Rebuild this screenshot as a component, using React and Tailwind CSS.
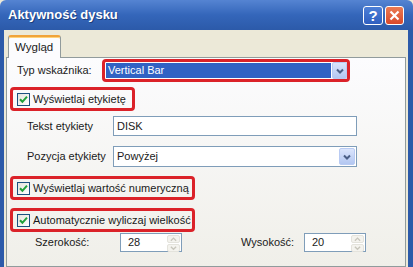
import React from "react";

const Chevron = ({ up = false, color = "#4b5f86", w = 8, sw = 2 }) => (
  <svg width={w} height="6" viewBox="0 0 8 6">
    <path
      d={up ? "M1 5 L4 2 L7 5" : "M1 1.5 L4 4.5 L7 1.5"}
      fill="none"
      stroke={color}
      strokeWidth={sw}
    />
  </svg>
);

const DropButton = ({ className = "" }) => (
  <div
    className={`flex items-center justify-center rounded-[2px] border border-[#b9cbf3] bg-gradient-to-b from-[#dbe5fc] to-[#b3c7f1] ${className}`}
  >
    <Chevron />
  </div>
);

const CheckBox = () => (
  <div className="flex h-[13px] w-[13px] shrink-0 items-center justify-center border border-[#1c5180] bg-gradient-to-br from-[#e4e3dc] to-white">
    <svg width="9" height="9" viewBox="0 0 9 9">
      <path d="M1 4.3 L3.4 6.8 L8 1.6" fill="none" stroke="#21a13a" strokeWidth="2" />
    </svg>
  </div>
);

const Marked = ({ children, className = "" }) => (
  <div className={`rounded-[4px] border-[3px] border-[#db2229] ${className}`}>
    {children}
  </div>
);

const CheckRow = ({ label, className = "" }) => (
  <Marked className={`flex h-[24px] items-center pl-[4px] ${className}`}>
    <CheckBox />
    <span className="ml-[3px] whitespace-nowrap">{label}</span>
  </Marked>
);

const Spinner = ({ value }) => (
  <div className="flex h-[19px] w-[62px] border border-[#7f9db9] bg-white">
    <span className="flex-1 pl-[7px] leading-[17px]">{value}</span>
    <div className="flex w-[15px] flex-col gap-px p-px">
      <div className="flex flex-1 items-center justify-center rounded-[2px] border border-[#e4e3dc] bg-[#f4f3ee]">
        <Chevron up color="#c8c6bc" w={7} sw={1.5} />
      </div>
      <div className="flex flex-1 items-center justify-center rounded-[2px] border border-[#e4e3dc] bg-[#f4f3ee]">
        <Chevron color="#c8c6bc" w={7} sw={1.5} />
      </div>
    </div>
  </div>
);

export default function App() {
  return (
    <div className="flex h-[267px] w-[413px] flex-col overflow-hidden bg-[#ece9d8] font-['Liberation_Sans',Arial,sans-serif] text-[11px] text-[#1a1a1a]">
      {/* Title bar */}
      <div className="flex h-[30px] shrink-0 items-center justify-between rounded-t-[6px] bg-gradient-to-b from-[#5584d2] via-[#3466ba] to-[#2c5aa9] pl-[8px] pr-[9px]">
        <span className="text-[13px] font-bold text-white [text-shadow:1px_1px_0_#1c3f7d]">
          Aktywność dysku
        </span>
        <div className="flex gap-[2px]">
          <div className="flex h-[19px] w-[20px] items-center justify-center rounded-[3px] border border-white bg-gradient-to-b from-[#4d7fd6] to-[#2f5fc0] text-[15px] font-bold leading-none text-white">
            ?
          </div>
          <div className="flex h-[19px] w-[19px] items-center justify-center rounded-[3px] border border-white bg-gradient-to-b from-[#eb7a52] to-[#d9482a]">
            <svg width="11" height="11" viewBox="0 0 11 11">
              <path d="M1.5 1.5 L9.5 9.5 M9.5 1.5 L1.5 9.5" stroke="white" strokeWidth="2.2" />
            </svg>
          </div>
        </div>
      </div>

      {/* Body */}
      <div className="flex flex-1 flex-col border-l-4 border-r-[5px] border-[#2c5aa9] pl-[2px] pr-[2px] pt-[5px]">
        {/* Tab strip */}
        <div className="relative z-10 ml-[2px] flex h-[23px] w-[53px] items-center rounded-t-[3px] border-x border-t-[2px] border-x-[#919b9c] border-t-[#f0a33a] bg-[#fcfcfe] pl-[6px] text-[11.5px] shadow-[inset_0_1px_0_#ffd27a]">
          Wygląd
        </div>
        {/* Panel */}
        <div className="-mt-px flex flex-1 flex-col border border-[#919b9c] bg-gradient-to-b from-[#fcfcfe] to-[#f0efe9] pl-[3px]">
          {/* Typ wskaźnika */}
          <div className="mt-px flex h-[23px] items-center">
            <span className="ml-[7px] w-[85px]">Typ wskaźnika:</span>
            <Marked className="flex h-[23px] w-[248px] bg-white p-0">
              <div className="flex flex-1 items-center p-px">
                <div className="flex h-[15px] flex-1 items-center bg-[#3162c4] pl-[2px] text-white">
                  Vertical Bar
                </div>
              </div>
              <DropButton className="h-[17px] w-[15px]" />
            </Marked>
          </div>

          <CheckRow label="Wyświetlaj etykietę" className="mt-[5px] w-[125px]" />

          {/* Tekst etykiety */}
          <div className="mt-[5px] flex h-[20px] items-center">
            <span className="ml-[17px] w-[86px]">Tekst etykiety</span>
            <div className="flex h-[20px] w-[244px] items-center border border-[#7f9db9] bg-white pl-[3px]">
              DISK
            </div>
          </div>

          {/* Pozycja etykiety */}
          <div className="mt-[10px] flex h-[21px] items-center">
            <span className="ml-[17px] w-[86px]">Pozycja etykiety</span>
            <div className="flex h-[21px] w-[244px] items-center border border-[#7f9db9] bg-white pl-[3px] pr-px">
              <span className="flex-1">Powyżej</span>
              <DropButton className="h-[17px] w-[16px]" />
            </div>
          </div>

          <CheckRow label="Wyświetlaj wartość numeryczną" className="mt-[9px] w-[185px]" />
          <CheckRow label="Automatycznie wyliczaj wielkość" className="mt-[8px] w-[185px]" />

          {/* Szerokość / Wysokość */}
          <div className="flex h-[20px] items-center">
            <span className="ml-[25px] w-[85px]">Szerokość:</span>
            <Spinner value="28" />
            <span className="ml-[59px] w-[63px]">Wysokość:</span>
            <Spinner value="20" />
          </div>
        </div>
      </div>
    </div>
  );
}
